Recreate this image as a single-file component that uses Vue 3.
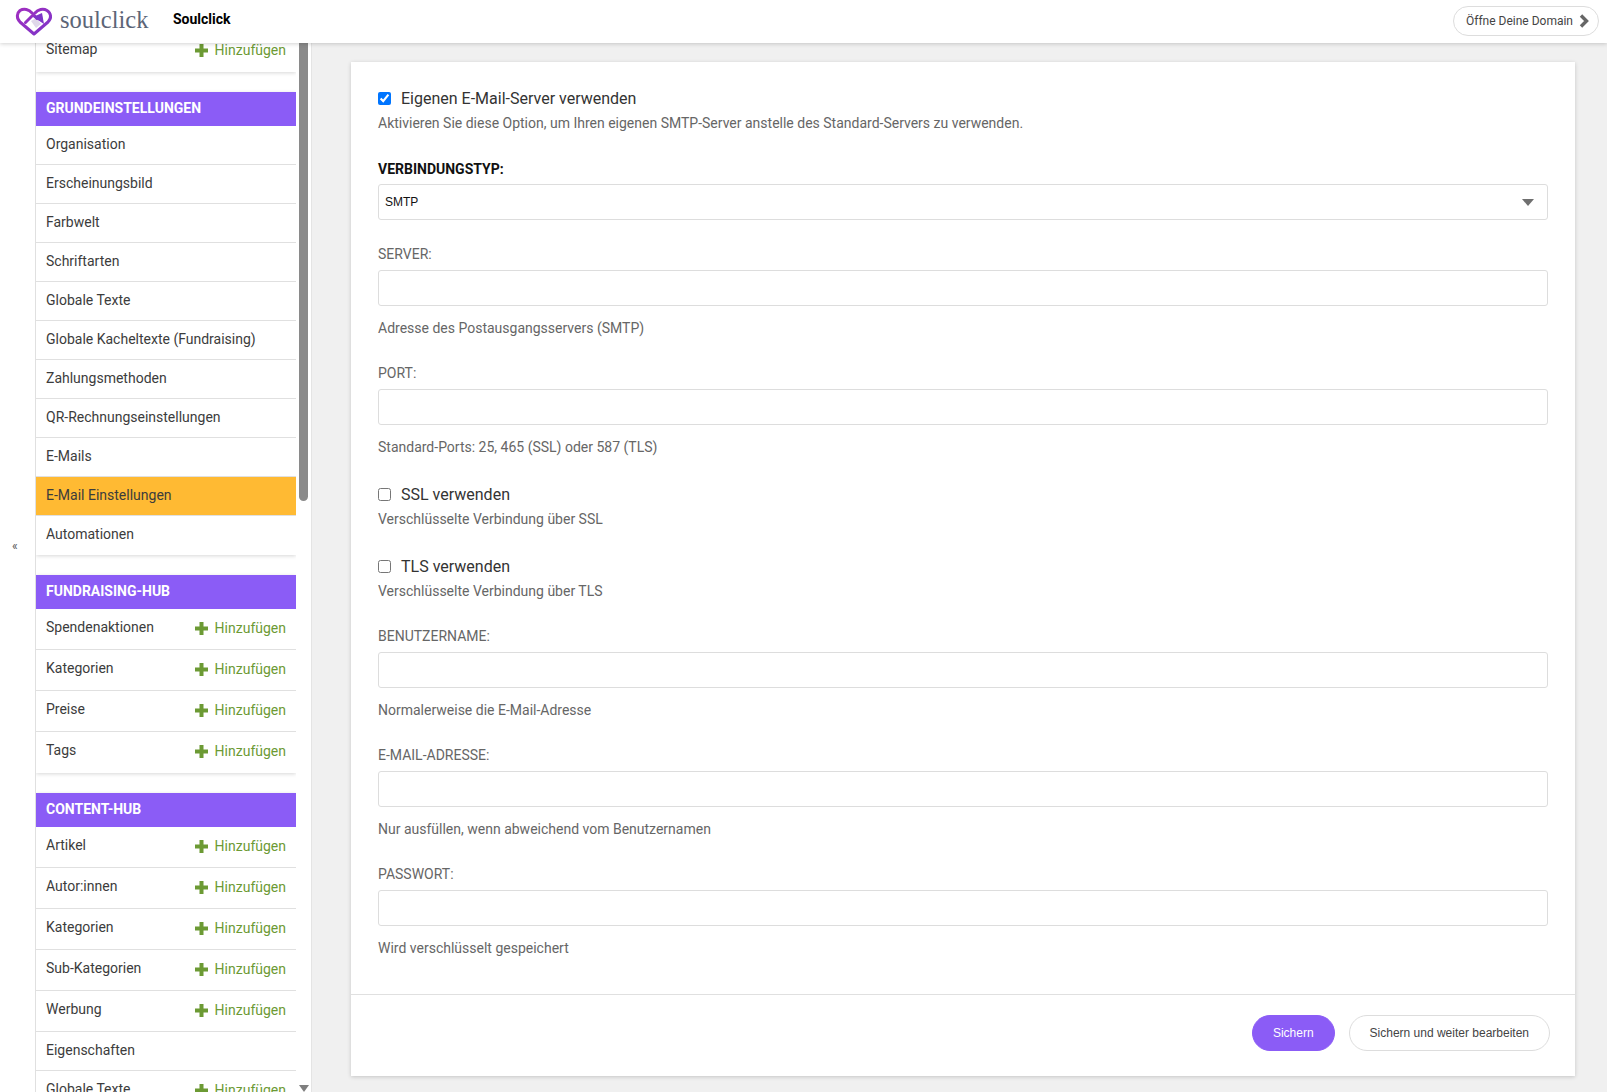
<script setup>
const groups = [
  { title: '', items: [{ n: 'Sitemap', add: true }] },
  { title: 'GRUNDEINSTELLUNGEN', items: [
    { n: 'Organisation' }, { n: 'Erscheinungsbild' }, { n: 'Farbwelt' }, { n: 'Schriftarten' }, { n: 'Globale Texte' },
    { n: 'Globale Kacheltexte (Fundraising)' }, { n: 'Zahlungsmethoden' }, { n: 'QR-Rechnungseinstellungen' }, { n: 'E-Mails' },
    { n: 'E-Mail Einstellungen', active: true }, { n: 'Automationen' } ] },
  { title: 'FUNDRAISING-HUB', items: [
    { n: 'Spendenaktionen', add: true }, { n: 'Kategorien', add: true }, { n: 'Preise', add: true }, { n: 'Tags', add: true } ] },
  { title: 'CONTENT-HUB', items: [
    { n: 'Artikel', add: true }, { n: 'Autor:innen', add: true }, { n: 'Kategorien', add: true }, { n: 'Sub-Kategorien', add: true },
    { n: 'Werbung', add: true }, { n: 'Eigenschaften' }, { n: 'Globale Texte', add: true } ] }
]
const fieldsA = [
  { label: 'SERVER:', hint: 'Adresse des Postausgangsservers (SMTP)' },
  { label: 'PORT:', hint: 'Standard-Ports: 25, 465 (SSL) oder 587 (TLS)' }
]
const checks = [
  { label: 'SSL verwenden', hint: 'Verschlüsselte Verbindung über SSL' },
  { label: 'TLS verwenden', hint: 'Verschlüsselte Verbindung über TLS' }
]
const fieldsB = [
  { label: 'BENUTZERNAME:', hint: 'Normalerweise die E-Mail-Adresse' },
  { label: 'E-MAIL-ADRESSE:', hint: 'Nur ausfüllen, wenn abweichend vom Benutzernamen' },
  { label: 'PASSWORT:', hint: 'Wird verschlüsselt gespeichert' }
]
</script>

<template>
  <div class="app">
    <header class="top">
      <div class="logo">
        <svg class="mark" width="38" height="34" viewBox="0 0 38 34" fill="none">
          <defs>
            <linearGradient id="lg" x1="0" y1="0" x2="1" y2="1">
              <stop offset="0" stop-color="#a02fc0" />
              <stop offset="1" stop-color="#7d35c8" />
            </linearGradient>
          </defs>
          <path d="M16 18 L21 15 L26 21 L21 25 Z" fill="#e0d8ea" />
          <path d="M10.5 19.5 L20 10 C23 6.5 28 5 32 7.5 C36 10 37 15 33 19 L19 31 L5 19 C1 15 2 10 5 7.5 C9 5 14 6.5 17 10 L22 15.5" stroke="url(#lg)" stroke-width="3" stroke-linejoin="round" stroke-linecap="round" />
          <path d="M18 14 L27 10 L29 21 Z" fill="#7d35c8" />
        </svg>
        <span class="word">soulclick</span>
      </div>
      <strong class="org">Soulclick</strong>
      <a class="domain">Öffne Deine Domain
        <svg width="10" height="14" viewBox="0 0 10 14"><path d="M2 1.5 L7.5 7 L2 12.5" fill="none" stroke="#666" stroke-width="3.4" /></svg>
      </a>
    </header>

    <div class="body">
      <div class="rail"><span>«</span></div>

      <nav class="side">
        <div class="side-inner">
          <section v-for="(g, i) in groups" :key="i" class="group">
            <h3 v-if="g.title" class="group-title">{{ g.title }}</h3>
            <div v-for="it in g.items" :key="it.n" class="row" :class="{ active: it.active, tall: it.add }">
              <span class="name">{{ it.n }}</span>
              <span v-if="it.add" class="add">
                <svg width="13" height="13" viewBox="0 0 13 13"><path d="M4.5 0h4v4.5H13v4H8.5V13h-4V8.5H0v-4h4.5z" fill="#6c9a34" /></svg>
                Hinzufügen
              </span>
            </div>
          </section>
        </div>
      </nav>

      <div class="scroll">
        <div class="thumb"></div>
        <svg class="down" width="10" height="7" viewBox="0 0 10 7"><path d="M0 0h10L5 7z" fill="#7f7f7f" /></svg>
      </div>

      <main class="main">
        <form class="card">
          <div class="fields">
            <label class="check first"><input type="checkbox" checked /> <span>Eigenen E-Mail-Server verwenden</span></label>
            <p class="hint tight">Aktivieren Sie diese Option, um Ihren eigenen SMTP-Server anstelle des Standard-Servers zu verwenden.</p>

            <div class="label strong">VERBINDUNGSTYP:</div>
            <div class="select">SMTP
              <svg width="12" height="7" viewBox="0 0 12 7"><path d="M0 0h12L6 7z" fill="#6f6f6f" /></svg>
            </div>

            <div v-for="f in fieldsA" :key="f.label" class="field">
              <div class="label">{{ f.label }}</div>
              <input class="input" type="text" />
              <p class="hint">{{ f.hint }}</p>
            </div>

            <div v-for="c in checks" :key="c.label" class="check-field">
              <label class="check"><input type="checkbox" /> <span>{{ c.label }}</span></label>
              <p class="hint tight">{{ c.hint }}</p>
            </div>

            <div v-for="f in fieldsB" :key="f.label" class="field">
              <div class="label">{{ f.label }}</div>
              <input class="input" type="text" />
              <p class="hint">{{ f.hint }}</p>
            </div>
          </div>
          <footer class="foot">
            <button type="button" class="btn primary">Sichern</button>
            <button type="button" class="btn">Sichern und weiter bearbeiten</button>
          </footer>
        </form>
      </main>
    </div>
  </div>
</template>

<style>
html, body { margin: 0; background: #fff; overflow: hidden; }
</style>

<style scoped>
.app {
  height: 100vh;
  display: flex;
  flex-direction: column;
  overflow: hidden;
  font-family: Roboto, "Liberation Sans", sans-serif;
  font-size: 14px;
  color: #3c3c3c;
}
.top {
  height: 43px;
  flex: none;
  display: flex;
  align-items: center;
  background: #fff;
  box-shadow: 0 1px 4px rgba(0, 0, 0, .18);
  position: relative;
  z-index: 2;
  padding: 0 8px 0 15px;
  box-sizing: border-box;
}
.logo { display: flex; align-items: center; gap: 7px; width: 158px; margin-top: -4px; }
.mark { flex: none; }
.word {
  font-family: "Liberation Serif", serif;
  font-size: 24.5px;
  color: #5c6577;
}
.org { font-size: 14px; font-weight: 700; color: #000; margin-top: -6px; }
.domain {
  margin-left: auto;
  height: 30px;
  box-sizing: border-box;
  border: 1px solid #ddd;
  border-radius: 15px;
  display: flex;
  align-items: center;
  gap: 6px;
  padding: 0 9px 0 12px;
  font-size: 12px;
  color: #444;
  margin-top: -2px;
}

.body { flex: 1; display: flex; min-height: 0; }
.rail {
  flex: none;
  border-right: 1px solid #e0e0e0;
  display: flex;
  align-items: center;
  font-size: 12px;
  color: #555;
  padding: 0 0 44px 12px;
  width: 23px;
}
.side { width: 260px; flex: none; overflow: hidden; }
.side-inner { margin-top: -12px; }
.group { margin-bottom: 20px; box-shadow: 0 1px 4px rgba(0, 0, 0, .16); background: #fff; }
.group-title {
  margin: 0;
  height: 34px;
  line-height: 32px;
  padding-left: 10px;
  background: #8b5cf6;
  color: #fff;
  font-size: 14px;
  font-weight: 700;
}
.row {
  height: 39px;
  box-sizing: border-box;
  border-bottom: 1px solid #e0e0e0;
  display: flex;
  align-items: center;
  justify-content: space-between;
  padding: 0 10px 2px;
  background: #fff;
}
.row:last-child { border-bottom-color: transparent; }
.row.tall { height: 41px; }
.row.tall .name { margin-top: -3px; }
.row.active { background: #ffba33; }
.add { display: flex; align-items: center; gap: 7px; color: #6c9a34; }

.scroll {
  width: 15px;
  flex: none;
  border-right: 1px solid #e4e4e4;
  display: flex;
  flex-direction: column;
  align-items: center;
  background: #fff;
}
.thumb { width: 9px; height: 458px; background: #8a8a8a; border-radius: 0 0 5px 5px; }
.down { margin-top: auto; }

.main {
  flex: 1;
  min-width: 0;
  background: #f0f0f0;
  padding: 19px 32px 16px 39px;
  box-sizing: border-box;
}
.card {
  height: 1014px;
  box-sizing: border-box;
  background: #fff;
  box-shadow: 0 1px 4px rgba(0, 0, 0, .18);
  display: flex;
  flex-direction: column;
}
.fields { flex: 1; padding: 25px 27px 0; }
.check { display: flex; align-items: center; height: 22px; font-size: 16px; color: #333; }
.check input { margin: 1px 10px 0 0; width: 13px; height: 13px; }
.hint { margin: 0; font-size: 14px; line-height: 22px; height: 22px; color: #666; padding-top: 11px; }
.hint.tight { padding-top: 3px; }
.label { font-size: 14px; line-height: 20px; color: #666; margin-bottom: 6px; }
.label.strong { color: #111; font-weight: 700; margin-top: 25px; margin-bottom: 5px; }
.select {
  height: 36px;
  box-sizing: border-box;
  border: 1px solid #ddd;
  border-radius: 3px;
  display: flex;
  align-items: center;
  justify-content: space-between;
  padding: 0 13px 1px 6px;
  font-family: "Liberation Sans", sans-serif;
  font-size: 12px;
  color: #111;
}
.select svg { margin-top: 1px; }
.field { margin-top: 24px; }
.input {
  display: block;
  width: 100%;
  height: 36px;
  box-sizing: border-box;
  border: 1px solid #ddd;
  border-radius: 3px;
  background: #fff;
  outline: 0;
}
.check-field { margin-top: 25px; }
.check-field + .field { margin-top: 24px; }
.foot {
  height: 82px;
  flex: none;
  border-top: 1px solid #e0e0e0;
  display: flex;
  justify-content: flex-end;
  align-items: flex-start;
  gap: 14px;
  padding: 20px 25px 0 0;
  box-sizing: border-box;
}
.btn {
  height: 36px;
  border-radius: 18px;
  border: 1px solid #ddd;
  background: #fff;
  padding: 0 20px;
  font-family: "Liberation Sans", sans-serif;
  font-size: 12px;
  color: #444;
}
.btn.primary { background: #8b5cf6; border-color: #8b5cf6; color: #fff; }
</style>
